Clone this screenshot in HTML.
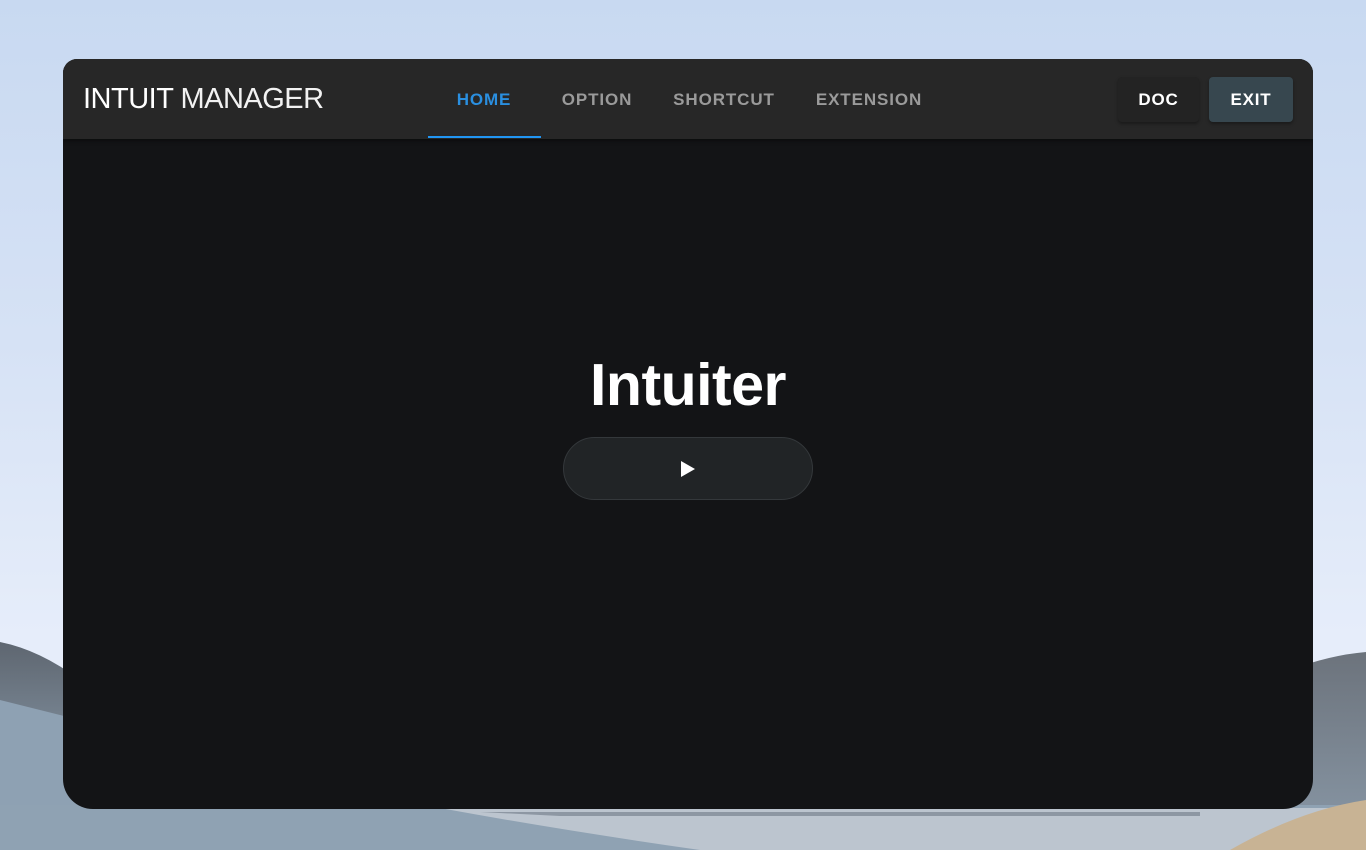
<!DOCTYPE html>
<html><head><meta charset="utf-8"><style>
*{margin:0;padding:0;box-sizing:border-box}
body{width:1366px;height:850px;overflow:hidden;position:relative;font-family:"Liberation Sans",sans-serif;background:linear-gradient(180deg,#c8d9f1 0%,#d6e2f5 40%,#e6edfa 75%,#e8eefa 100%)}
.bg{position:absolute;left:0;top:0}
.card{position:absolute;left:63px;top:59px;width:1250px;height:750px;background:#131416;border-radius:14px 14px 30px 30px;overflow:hidden}
.hdr{position:absolute;left:0;top:0;width:1250px;height:80px;background:#272727;box-shadow:0 2px 4px rgba(0,0,0,.4)}
.logo{position:absolute;left:20px;top:24px;font-size:29px;color:#fff;letter-spacing:-0.5px}
.logo span{color:#f2f2f2}
.tab{position:absolute;top:31px;font-size:17px;font-weight:bold;letter-spacing:0.9px;color:#9a9a9a;transform:translateX(-50%)}
.ul{position:absolute;left:365px;top:77px;width:113px;height:2px;background:#2196f3}
.btn{position:absolute;top:18px;height:45px;border-radius:4px;font-size:17px;font-weight:bold;color:#fff;letter-spacing:0.8px;text-align:center;line-height:45px;box-shadow:0 2px 3px rgba(0,0,0,.35)}
h1{position:absolute;left:0;width:1250px;top:292px;text-align:center;font-size:59px;font-weight:bold;color:#fff;letter-spacing:-0.5px}
.pill{position:absolute;left:500px;top:378px;width:250px;height:63px;border-radius:32px;background:#212426;border:1px solid #34383b}
.pill svg{position:absolute;left:117px;top:23px}
</style></head><body>
<svg class="bg" width="1366" height="850" viewBox="0 0 1366 850">
<defs>
<linearGradient id="g1" x1="0" y1="0" x2="0" y2="1"><stop offset="0" stop-color="#5e6670"/><stop offset="0.5" stop-color="#7d8b99"/><stop offset="1" stop-color="#8fa2b4"/></linearGradient>
<linearGradient id="g2" x1="0" y1="0" x2="0" y2="1"><stop offset="0" stop-color="#6c737c"/><stop offset="1" stop-color="#8a99a8"/></linearGradient>
</defs>
<path d="M0 642 Q40 650 80 680 L80 850 L0 850Z" fill="url(#g1)"/>
<path d="M0 700 L80 720 L80 850 L0 850Z" fill="#8ea1b3"/>
<path d="M1290 670 Q1330 655 1366 652 L1366 850 L1290 850Z" fill="url(#g2)"/>
<rect x="0" y="805" width="1366" height="45" fill="#8fa2b3"/>
<path d="M440 808 L1366 808 L1366 850 L700 850 Q560 830 440 808Z" fill="#bcc5cf"/>
<path d="M480 812 L1200 812 L1200 816 L560 816Z" fill="#8d97a3"/>
<path d="M1230 850 Q1300 810 1366 800 L1366 850Z" fill="#c8b394"/>
</svg>
<div class="card">
<div class="hdr">
<div class="logo">INTUIT <span>MANAGER</span></div>
<div class="tab" style="left:421px;color:#2a8fe0">HOME</div>
<div class="tab" style="left:534px">OPTION</div>
<div class="tab" style="left:661px">SHORTCUT</div>
<div class="tab" style="left:806px">EXTENSION</div>
<div class="ul"></div>
<div class="btn" style="left:1055px;width:81px;background:#232323">DOC</div>
<div class="btn" style="left:1146px;width:84px;background:#37474f">EXIT</div>
</div>
<h1>Intuiter</h1>
<div class="pill"><svg width="14" height="16" viewBox="0 0 14 16"><path d="M0 0 L14 8 L0 16Z" fill="#fff"/></svg></div>
</div>
</body></html>
